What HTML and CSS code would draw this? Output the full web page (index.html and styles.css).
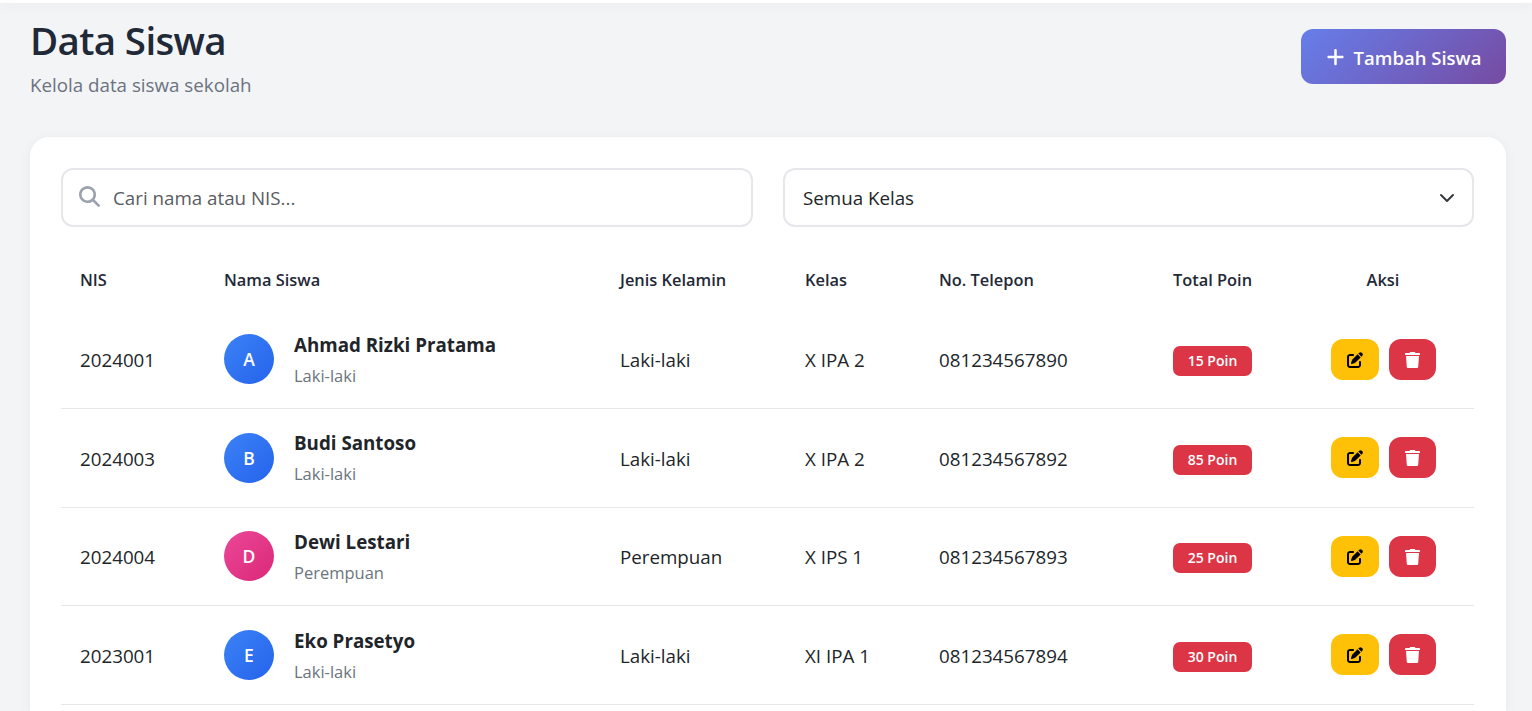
FILE: index.html
```html
<!DOCTYPE html>
<html lang="id">
<head>
    <meta charset="UTF-8">
    <meta name="viewport" content="width=device-width, initial-scale=1.0">
    <title>Data Siswa</title>
    <link rel="stylesheet" href="styles.css">
</head>
<body>
    <!-- Icons -->
    <svg class="icon-defs" width="0" height="0">
        <symbol id="icon-search" viewBox="0 0 512 512">
            <path d="M416 208c0 45.900-14.900 88.300-40 122.700L502.600 457.400c12.500 12.500 12.500 32.800 0 45.300s-32.800 12.500-45.300 0L330.700 376c-34.400 25.200-76.800 40-122.700 40C93.100 416 0 322.900 0 208S93.100 0 208 0S416 93.100 416 208zM208 352a144 144 0 1 0 0-288 144 144 0 1 0 0 288z"/>
        </symbol>
        <symbol id="icon-plus" viewBox="0 0 448 512">
            <path d="M256 80c0-17.700-14.300-32-32-32s-32 14.300-32 32V224H48c-17.700 0-32 14.300-32 32s14.300 32 32 32H192V432c0 17.700 14.300 32 32 32s32-14.300 32-32V288H400c17.700 0 32-14.300 32-32s-14.300-32-32-32H256V80z"/>
        </symbol>
        <symbol id="icon-edit" viewBox="0 0 512 512">
            <path d="M471.600 21.700c-21.900-21.900-57.300-21.900-79.200 0L362.300 51.700l97.900 97.900 30.100-30.100c21.900-21.900 21.900-57.300 0-79.200L471.600 21.700zm-299.200 220c-6.100 6.100-10.800 13.600-13.500 21.900l-29.600 88.800c-2.900 8.600-.6 18.100 5.800 24.600s15.900 8.700 24.600 5.800l88.800-29.600c8.200-2.700 15.700-7.400 21.900-13.500L437.700 172.300 339.700 74.300 172.400 241.700zM96 64C43 64 0 107 0 160V416c0 53 43 96 96 96H352c53 0 96-43 96-96V320c0-17.700-14.300-32-32-32s-32 14.300-32 32v96c0 17.700-14.300 32-32 32H96c-17.700 0-32-14.300-32-32V160c0-17.700 14.300-32 32-32h96c17.700 0 32-14.300 32-32s-14.300-32-32-32H96z"/>
        </symbol>
        <symbol id="icon-trash" viewBox="0 0 15 17">
            <path d="M4.500 1 5 .3C5.200.1 5.500 0 5.800 0h3.400c.3 0 .6.100.8.300l.5.700h3.700c.5 0 .8.400.8.900v.500c0 .4-.3.600-.7.600H.7C.3 3 0 2.800 0 2.400v-.5C0 1.400.3 1 .8 1zM1 4h13l-.8 10.900c-.1.700-.7 1.200-1.400 1.200H3.200c-.7 0-1.300-.5-1.400-1.200z"/>
        </symbol>
    </svg>

    <div class="topbar"></div>

    <main class="content">
        <div class="page-header">
            <div>
                <h1>Data Siswa</h1>
                <p>Kelola data siswa sekolah</p>
            </div>
            <button class="btn-tambah">
                <svg class="icon-plus"><use href="#icon-plus"/></svg>
                <span>Tambah Siswa</span>
            </button>
        </div>

        <div class="card">
            <div class="filters">
                <label class="search-box">
                    <svg class="icon-search"><use href="#icon-search"/></svg>
                    <input type="text" placeholder="Cari nama atau NIS...">
                </label>
                <div class="select-box">
                    <span>Semua Kelas</span>
                    <svg class="icon-chevron" viewBox="0 0 16 16"><path d="m2 5 6 6 6-6"/></svg>
                </div>
            </div>

            <table>
                <colgroup>
                    <col class="col-nis">
                    <col class="col-nama">
                    <col class="col-jk">
                    <col class="col-kelas">
                    <col class="col-telp">
                    <col class="col-poin">
                    <col class="col-aksi">
                </colgroup>
                <thead>
                    <tr>
                        <th>NIS</th>
                        <th>Nama Siswa</th>
                        <th>Jenis Kelamin</th>
                        <th>Kelas</th>
                        <th>No. Telepon</th>
                        <th class="center">Total Poin</th>
                        <th class="center">Aksi</th>
                    </tr>
                </thead>
                <tbody>
                    <tr>
                        <td>2024001</td>
                        <td>
                            <div class="siswa">
                                <div class="avatar male">A</div>
                                <div>
                                    <div class="nama">Ahmad Rizki Pratama</div>
                                    <div class="gender">Laki-laki</div>
                                </div>
                            </div>
                        </td>
                        <td>Laki-laki</td>
                        <td>X IPA 2</td>
                        <td>081234567890</td>
                        <td class="center"><span class="badge">15 Poin</span></td>
                        <td>
                            <div class="aksi">
                                <button class="btn-edit"><svg><use href="#icon-edit"/></svg></button>
                                <button class="btn-hapus"><svg><use href="#icon-trash"/></svg></button>
                            </div>
                        </td>
                    </tr>
                    <tr>
                        <td>2024003</td>
                        <td>
                            <div class="siswa">
                                <div class="avatar male">B</div>
                                <div>
                                    <div class="nama">Budi Santoso</div>
                                    <div class="gender">Laki-laki</div>
                                </div>
                            </div>
                        </td>
                        <td>Laki-laki</td>
                        <td>X IPA 2</td>
                        <td>081234567892</td>
                        <td class="center"><span class="badge">85 Poin</span></td>
                        <td>
                            <div class="aksi">
                                <button class="btn-edit"><svg><use href="#icon-edit"/></svg></button>
                                <button class="btn-hapus"><svg><use href="#icon-trash"/></svg></button>
                            </div>
                        </td>
                    </tr>
                    <tr>
                        <td>2024004</td>
                        <td>
                            <div class="siswa">
                                <div class="avatar female">D</div>
                                <div>
                                    <div class="nama">Dewi Lestari</div>
                                    <div class="gender">Perempuan</div>
                                </div>
                            </div>
                        </td>
                        <td>Perempuan</td>
                        <td>X IPS 1</td>
                        <td>081234567893</td>
                        <td class="center"><span class="badge">25 Poin</span></td>
                        <td>
                            <div class="aksi">
                                <button class="btn-edit"><svg><use href="#icon-edit"/></svg></button>
                                <button class="btn-hapus"><svg><use href="#icon-trash"/></svg></button>
                            </div>
                        </td>
                    </tr>
                    <tr>
                        <td>2023001</td>
                        <td>
                            <div class="siswa">
                                <div class="avatar male">E</div>
                                <div>
                                    <div class="nama">Eko Prasetyo</div>
                                    <div class="gender">Laki-laki</div>
                                </div>
                            </div>
                        </td>
                        <td>Laki-laki</td>
                        <td>XI IPA 1</td>
                        <td>081234567894</td>
                        <td class="center"><span class="badge">30 Poin</span></td>
                        <td>
                            <div class="aksi">
                                <button class="btn-edit"><svg><use href="#icon-edit"/></svg></button>
                                <button class="btn-hapus"><svg><use href="#icon-trash"/></svg></button>
                            </div>
                        </td>
                    </tr>
                </tbody>
            </table>
        </div>
    </main>
</body>
</html>
```

FILE: styles.css
```css
* {
    margin: 0;
    padding: 0;
    box-sizing: border-box;
}
body {
    font-family: "Segoe UI", "Open Sans", "Noto Sans", sans-serif;
    font-size: 18.75px;
    line-height: 30px;
    color: #212529;
    background: #f3f4f6;
}
svg {
    display: block;
    fill: currentColor;
}
.icon-defs {
    position: absolute;
}
button,
input {
    font: inherit;
    border: none;
    outline: none;
}
.topbar {
    height: 3px;
    background: white;
    box-shadow: 0 2px 12px rgba(0, 0, 0, 0.08);
}
.content {
    padding: 13px 26px 0 30px;
}
.page-header {
    display: flex;
    justify-content: space-between;
    align-items: flex-start;
    height: 121px;
}
.page-header h1 {
    font-size: 38.5px;
    font-weight: 600;
    line-height: 48px;
    letter-spacing: -0.65px;
    color: #1f2937;
}
.page-header p {
    margin-top: 6px;
    color: #6b7280;
}
.btn-tambah {
    display: flex;
    align-items: center;
    justify-content: center;
    gap: 9px;
    width: 205px;
    height: 55px;
    margin-top: 13px;
    padding-top: 2px;
    border-radius: 12px;
    color: white;
    font-size: 18.5px;
    font-weight: 600;
    background: linear-gradient(135deg, #667eea 0%, #764ba2 100%);
}
.icon-plus {
    width: 19px;
    height: 20px;
    margin-top: -2px;
}
.card {
    height: 574px;
    padding: 31px 32px 0 31px;
    background: white;
    border-radius: 19px 19px 0 0;
    box-shadow: 0 2px 12px rgba(0, 0, 0, 0.05);
}
.filters {
    display: grid;
    grid-template-columns: 692px 691px;
    gap: 30px;
}
.search-box,
.select-box {
    display: flex;
    align-items: center;
    height: 59px;
    padding: 0 16px;
    border: 2px solid #e5e7eb;
    border-radius: 12px;
}
.search-box {
    gap: 13px;
}
.search-box input {
    flex: 1;
    background: none;
}
.search-box input::placeholder {
    color: #595c5f;
}
.icon-search {
    width: 21px;
    height: 21px;
    margin-top: -3px;
    color: #9ca3af;
}
.select-box {
    justify-content: space-between;
    padding: 0 17px 0 18px;
}
.icon-chevron {
    width: 16px;
    height: 16px;
    fill: none;
    stroke: #343a40;
    stroke-width: 2;
    stroke-linecap: round;
    stroke-linejoin: round;
}
table {
    width: 1413px;
    margin-top: 23px;
    table-layout: fixed;
    border-collapse: separate;
    border-spacing: 0;
}
.col-nis {
    width: 144px;
}
.col-nama {
    width: 396px;
}
.col-jk {
    width: 185px;
}
.col-kelas {
    width: 134px;
}
.col-telp {
    width: 213px;
}
.col-poin {
    width: 159px;
}
.col-aksi {
    width: 182px;
}
th {
    height: 60.5px;
    padding: 0 19px;
    text-align: left;
    font-size: 16.4px;
    font-weight: 600;
    color: #1f2937;
}
td {
    height: 98.6px;
    padding: 2px 19px 0;
    border-bottom: 1px solid #e5e7eb;
}
.center {
    text-align: center;
}
.siswa {
    display: flex;
    align-items: center;
    gap: 20px;
    margin-top: -2px;
}
.avatar {
    display: flex;
    align-items: center;
    justify-content: center;
    width: 50px;
    height: 50px;
    border-radius: 50%;
    color: white;
    font-size: 17.5px;
    font-weight: 600;
}
.male {
    background: linear-gradient(135deg, #3b82f6, #2563eb);
}
.female {
    background: linear-gradient(135deg, #ec4899, #db2777);
}
.nama {
    padding-top: 2px;
    font-weight: 700;
}
.gender {
    font-size: 16.5px;
    line-height: 31px;
    color: #6c757d;
}
.badge {
    display: inline-block;
    padding: 0 15px;
    border-radius: 7px;
    font-size: 14px;
    font-weight: 600;
    color: white;
    background: #dc3545;
}
.aksi {
    display: flex;
    justify-content: center;
    gap: 10px;
    margin-top: -2.5px;
}
.aksi button {
    display: flex;
    align-items: center;
    justify-content: center;
    width: 47px;
    height: 41px;
    padding-top: 1px;
    border-radius: 12px;
}
.aksi .btn-edit {
    width: 48px;
    color: black;
    background: #ffc107;
}
.aksi .btn-hapus {
    padding-top: 2px;
    color: white;
    background: #dc3545;
}
.aksi svg {
    width: 16px;
    height: 16px;
}
.aksi .btn-hapus svg {
    width: 15px;
    height: 17px;
}
```
